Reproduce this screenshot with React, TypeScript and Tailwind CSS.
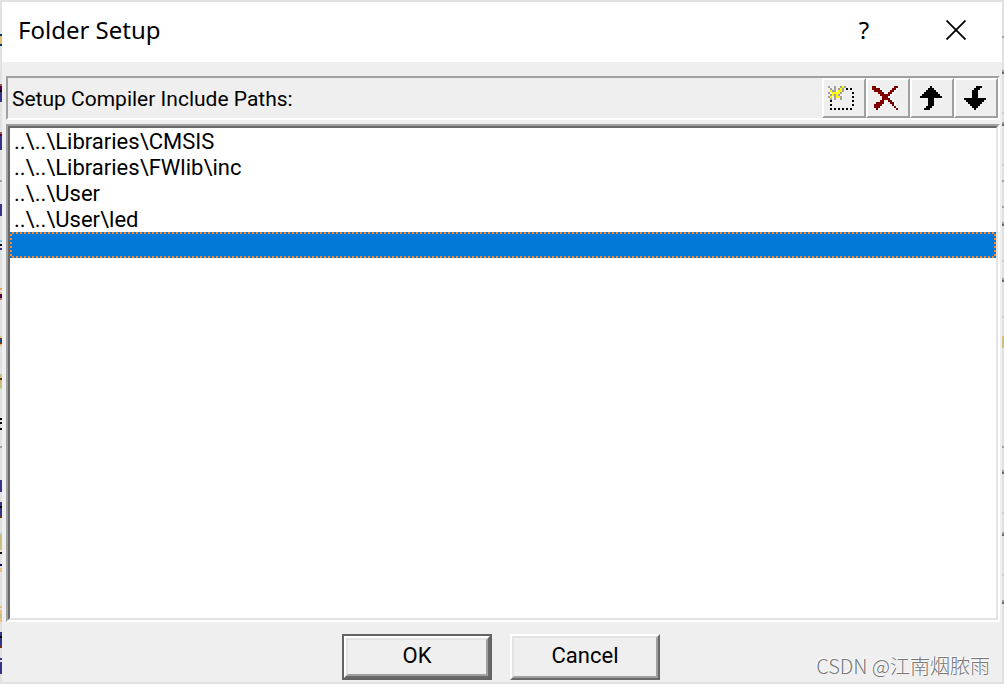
import { useState } from 'react';

type Mark = [y: number, height: number, color: string];

const leftMarks: Mark[] = [
  [34, 2, '#003070'], [36, 8, '#e8bc74'], [44, 2, '#003070'],
  [84, 2, '#a85a40'], [86, 4, '#500040'], [90, 2, '#000000'], [92, 10, '#353587'],
  [132, 2, '#a85a40'], [134, 2, '#500040'], [136, 14, '#353587'],
  [180, 2, '#a0a0a0'], [204, 12, '#353587'], [240, 2, '#7cc4ec'], [244, 2, '#000000'], [248, 2, '#353587'],
  [288, 2, '#e8a050'], [292, 2, '#e8c080'], [294, 4, '#500040'], [298, 2, '#c08060'],
  [336, 2, '#d0d080'], [338, 2, '#603838'], [340, 2, '#0050a0'], [342, 2, '#803000'], [344, 2, '#e8c080'],
  [374, 14, '#c8c080'], [378, 2, '#603800'], [388, 2, '#c0e8b0'],
  [418, 2, '#000000'], [422, 2, '#000000'], [428, 2, '#000000'], [446, 2, '#a0a0a0'],
  [480, 12, '#353587'], [502, 14, '#353587'], [506, 2, '#000000'], [516, 2, '#803000'],
  [532, 2, '#b8e0e8'], [534, 16, '#c8c080'], [552, 2, '#000000'], [564, 2, '#000060'], [568, 4, '#e8c080'],
  [606, 2, '#e8c080'], [610, 4, '#e8c080'], [614, 4, '#c8c080'], [618, 4, '#e8c080'],
  [632, 14, '#353587'], [636, 2, '#000000'], [646, 2, '#803000'], [658, 2, '#353587'], [662, 12, '#353587'],
];

const rightMarks: Mark[] = [
  [36, 2, '#a0a0a0'], [70, 2, '#a0a0a0'], [72, 2, '#696969'], [112, 2, '#cccccc'],
  [122, 2, '#a0a0a0'], [124, 2, '#696969'], [164, 2, '#cccccc'], [180, 2, '#a0a0a0'],
  [206, 2, '#a0a0a0'], [222, 2, '#a0a0a0'], [224, 2, '#696969'], [260, 2, '#cccccc'],
  [278, 2, '#a0a0a0'], [280, 2, '#696969'], [316, 2, '#cccccc'], [336, 2, '#e8c080'], [338, 10, '#c8c080'],
  [446, 2, '#a0a0a0'], [470, 2, '#a0a0a0'], [472, 2, '#696969'], [512, 2, '#cccccc'],
  [532, 2, '#a0a0a0'], [534, 2, '#696969'], [574, 2, '#cccccc'], [600, 2, '#a0a0a0'], [602, 2, '#696969'],
];

function EdgeMarks({ marks, className }: { marks: Mark[]; className: string }) {
  return (
    <svg aria-hidden="true" width="2" height="684" className={className} shapeRendering="crispEdges">
      {marks.map(([y, h, color]) => (
        <rect key={`${y}-${color}`} x="0" y={y} width="2" height={h} fill={color} />
      ))}
    </svg>
  );
}

const palette: Record<string, string> = {
  k: '#000000', r: '#800000', w: '#ffffff', g: '#a0a0a0', y: '#ffff00',
};

function PixelIcon({ rows }: { rows: string[] }) {
  const cols = Math.max(...rows.map((row) => row.length));
  return (
    <svg
      aria-hidden="true"
      width={cols * 2}
      height={rows.length * 2}
      viewBox={`0 0 ${cols} ${rows.length}`}
      shapeRendering="crispEdges"
    >
      {rows.flatMap((row, y) =>
        [...row].map((c, x) =>
          palette[c] ? <rect key={`${x}-${y}`} x={x} y={y} width="1" height="1" fill={palette[c]} /> : null,
        ),
      )}
    </svg>
  );
}

const newIcon = [
  'g..g..gyg......',
  '.g.g.gyg.k.k...',
  '.ygg.yyg.......',
  'g.yyyyg.....k..',
  '.gygyg.........',
  'gy.gyyg.....k..',
  '.g.g..g........',
  '.k..........k..',
  '...............',
  '.k..........k..',
  '...............',
  '.k.k.k.k.k.k...',
];

const deleteIcon = [
  'rrw........rrw.',
  'rrrrw.....rrw..',
  '.rrrrw...rrw...',
  '...rrrw.rrw....',
  '....rrrrrw.....',
  '.....rrrw......',
  '.....rrrrw.....',
  '....rrwwrrw....',
  '..rrrrw..rrw...',
  '.rrrrw....rw...',
  '.rrrw......rw..',
  '..rw........rw.',
];

const upIcon = [
  '.....k.....',
  '....kkk....',
  '...kkkkk...',
  '..kkkkkkk..',
  '.kkkkkkkkk.',
  'kkkkkkkkkkk',
  '....kkk....',
  '....kkk....',
  '....kkk....',
  '....kkk....',
  '...kkk.....',
  '..kkk......',
];

const downIcon = [
  '......kkk..',
  '.....kkk...',
  '....kkk....',
  '....kkk....',
  '....kkk....',
  '....kkk....',
  'kkkkkkkkkkk',
  '.kkkkkkkkk.',
  '..kkkkkkk..',
  '...kkkkk...',
  '....kkk....',
  '.....k.....',
];

const tools = [
  { label: 'New', icon: newIcon },
  { label: 'Delete', icon: deleteIcon },
  { label: 'Move up', icon: upIcon },
  { label: 'Move down', icon: downIcon },
];

const paths = ['..\\..\\Libraries\\CMSIS', '..\\..\\Libraries\\FWlib\\inc', '..\\..\\User', '..\\..\\User\\led', ''];

export default function App() {
  const [selected, setSelected] = useState(4);

  return (
    <div className="relative flex min-h-screen flex-col border-2 border-[#e1e1e1] bg-[#efefef] font-['Roboto',Arial,sans-serif] text-black">
      <EdgeMarks marks={leftMarks} className="absolute -top-0.5 -left-0.5" />
      <EdgeMarks marks={rightMarks} className="absolute -top-0.5 -right-0.5" />

      <header className="flex h-15 items-center bg-white pb-1 pl-4">
        <h1 className="flex-1 font-['Noto_Sans','Open_Sans',sans-serif] text-2xl">Folder Setup</h1>
        <button
          type="button"
          aria-label="Help"
          className="flex h-full w-23 items-center justify-center font-['Noto_Sans','Open_Sans',sans-serif] text-2xl"
        >
          ?
        </button>
        <button type="button" aria-label="Close" className="flex h-full w-23 items-center justify-center">
          <svg width="20" height="20" viewBox="0 0 20 20" stroke="#000" strokeWidth="1.8" fill="none">
            <path d="M0.5 0.5 19.5 19.5M19.5 0.5 0.5 19.5" />
          </svg>
        </button>
      </header>

      <main className="flex flex-1 flex-col pt-3.5 pr-0.5 pl-1">
        <div className="flex h-11 border-2 border-t-[#a0a0a0] border-r-white border-b-white border-l-[#a0a0a0]">
          <h2 id="paths-label" className="flex flex-1 items-center pt-1 pl-1 text-[21px]">
            Setup Compiler Include Paths:
          </h2>
          <div role="toolbar" aria-label="Path actions" className="flex">
            {tools.map((tool) => (
              <button
                key={tool.label}
                type="button"
                aria-label={tool.label}
                className="flex w-11 items-center justify-center border-2 border-t-white border-r-[#a0a0a0] border-b-[#a0a0a0] border-l-white pr-0.5"
              >
                <PixelIcon rows={tool.icon} />
              </button>
            ))}
          </div>
        </div>

        <div className="mt-1 flex flex-1 flex-col border-2 border-t-[#a0a0a0] border-r-white border-b-white border-l-[#a0a0a0]">
          <ul
            role="listbox"
            aria-labelledby="paths-label"
            className="flex-1 border-2 border-t-[#696969] border-r-[#e3e3e3] border-b-[#e3e3e3] border-l-[#696969] bg-white text-[22px] leading-7"
          >
            {paths.map((path, i) => (
              <li
                key={i}
                role="option"
                aria-selected={i === selected}
                onClick={() => setSelected(i)}
                className={
                  i === selected
                    ? 'h-6.5 bg-[repeating-conic-gradient(#ff8728_0_25%,#0078d7_0_50%)] bg-size-[4px_4px] p-0.5'
                    : 'h-6.5 pl-1'
                }
              >
                {i === selected ? (
                  <div className="flex h-full items-center bg-[#0078d7] pl-0.5 text-white">{path}</div>
                ) : (
                  path
                )}
              </li>
            ))}
          </ul>
        </div>
      </main>

      <footer className="flex h-15 items-start justify-center gap-4.5 pt-3 pr-0.5">
        <button type="button" className="h-11.5 w-37.5 border-2 border-[#646464] text-[22px]">
          <span className="block h-full border-2 border-t-white border-r-[#696969] border-b-[#696969] border-l-white">
            <span className="flex h-full items-center justify-center border-2 border-t-[#e3e3e3] border-r-[#a0a0a0] border-b-[#a0a0a0] border-l-[#e3e3e3] pb-1">
              OK
            </span>
          </span>
        </button>
        <button
          type="button"
          className="h-11.5 w-37.5 border-2 border-t-white border-r-[#696969] border-b-[#696969] border-l-white text-[22px]"
        >
          <span className="flex h-full items-center justify-center border-2 border-t-[#e3e3e3] border-r-[#a0a0a0] border-b-[#a0a0a0] border-l-[#e3e3e3] pb-1">
            Cancel
          </span>
        </button>
      </footer>

      <p className="pointer-events-none absolute right-3 bottom-1 font-['Noto_Sans_CJK_SC',sans-serif] text-xl leading-6 font-light text-[#777777] [text-shadow:-1px_-1px_0_#fff]">
        CSDN @江南烟脓雨
      </p>
    </div>
  );
}
